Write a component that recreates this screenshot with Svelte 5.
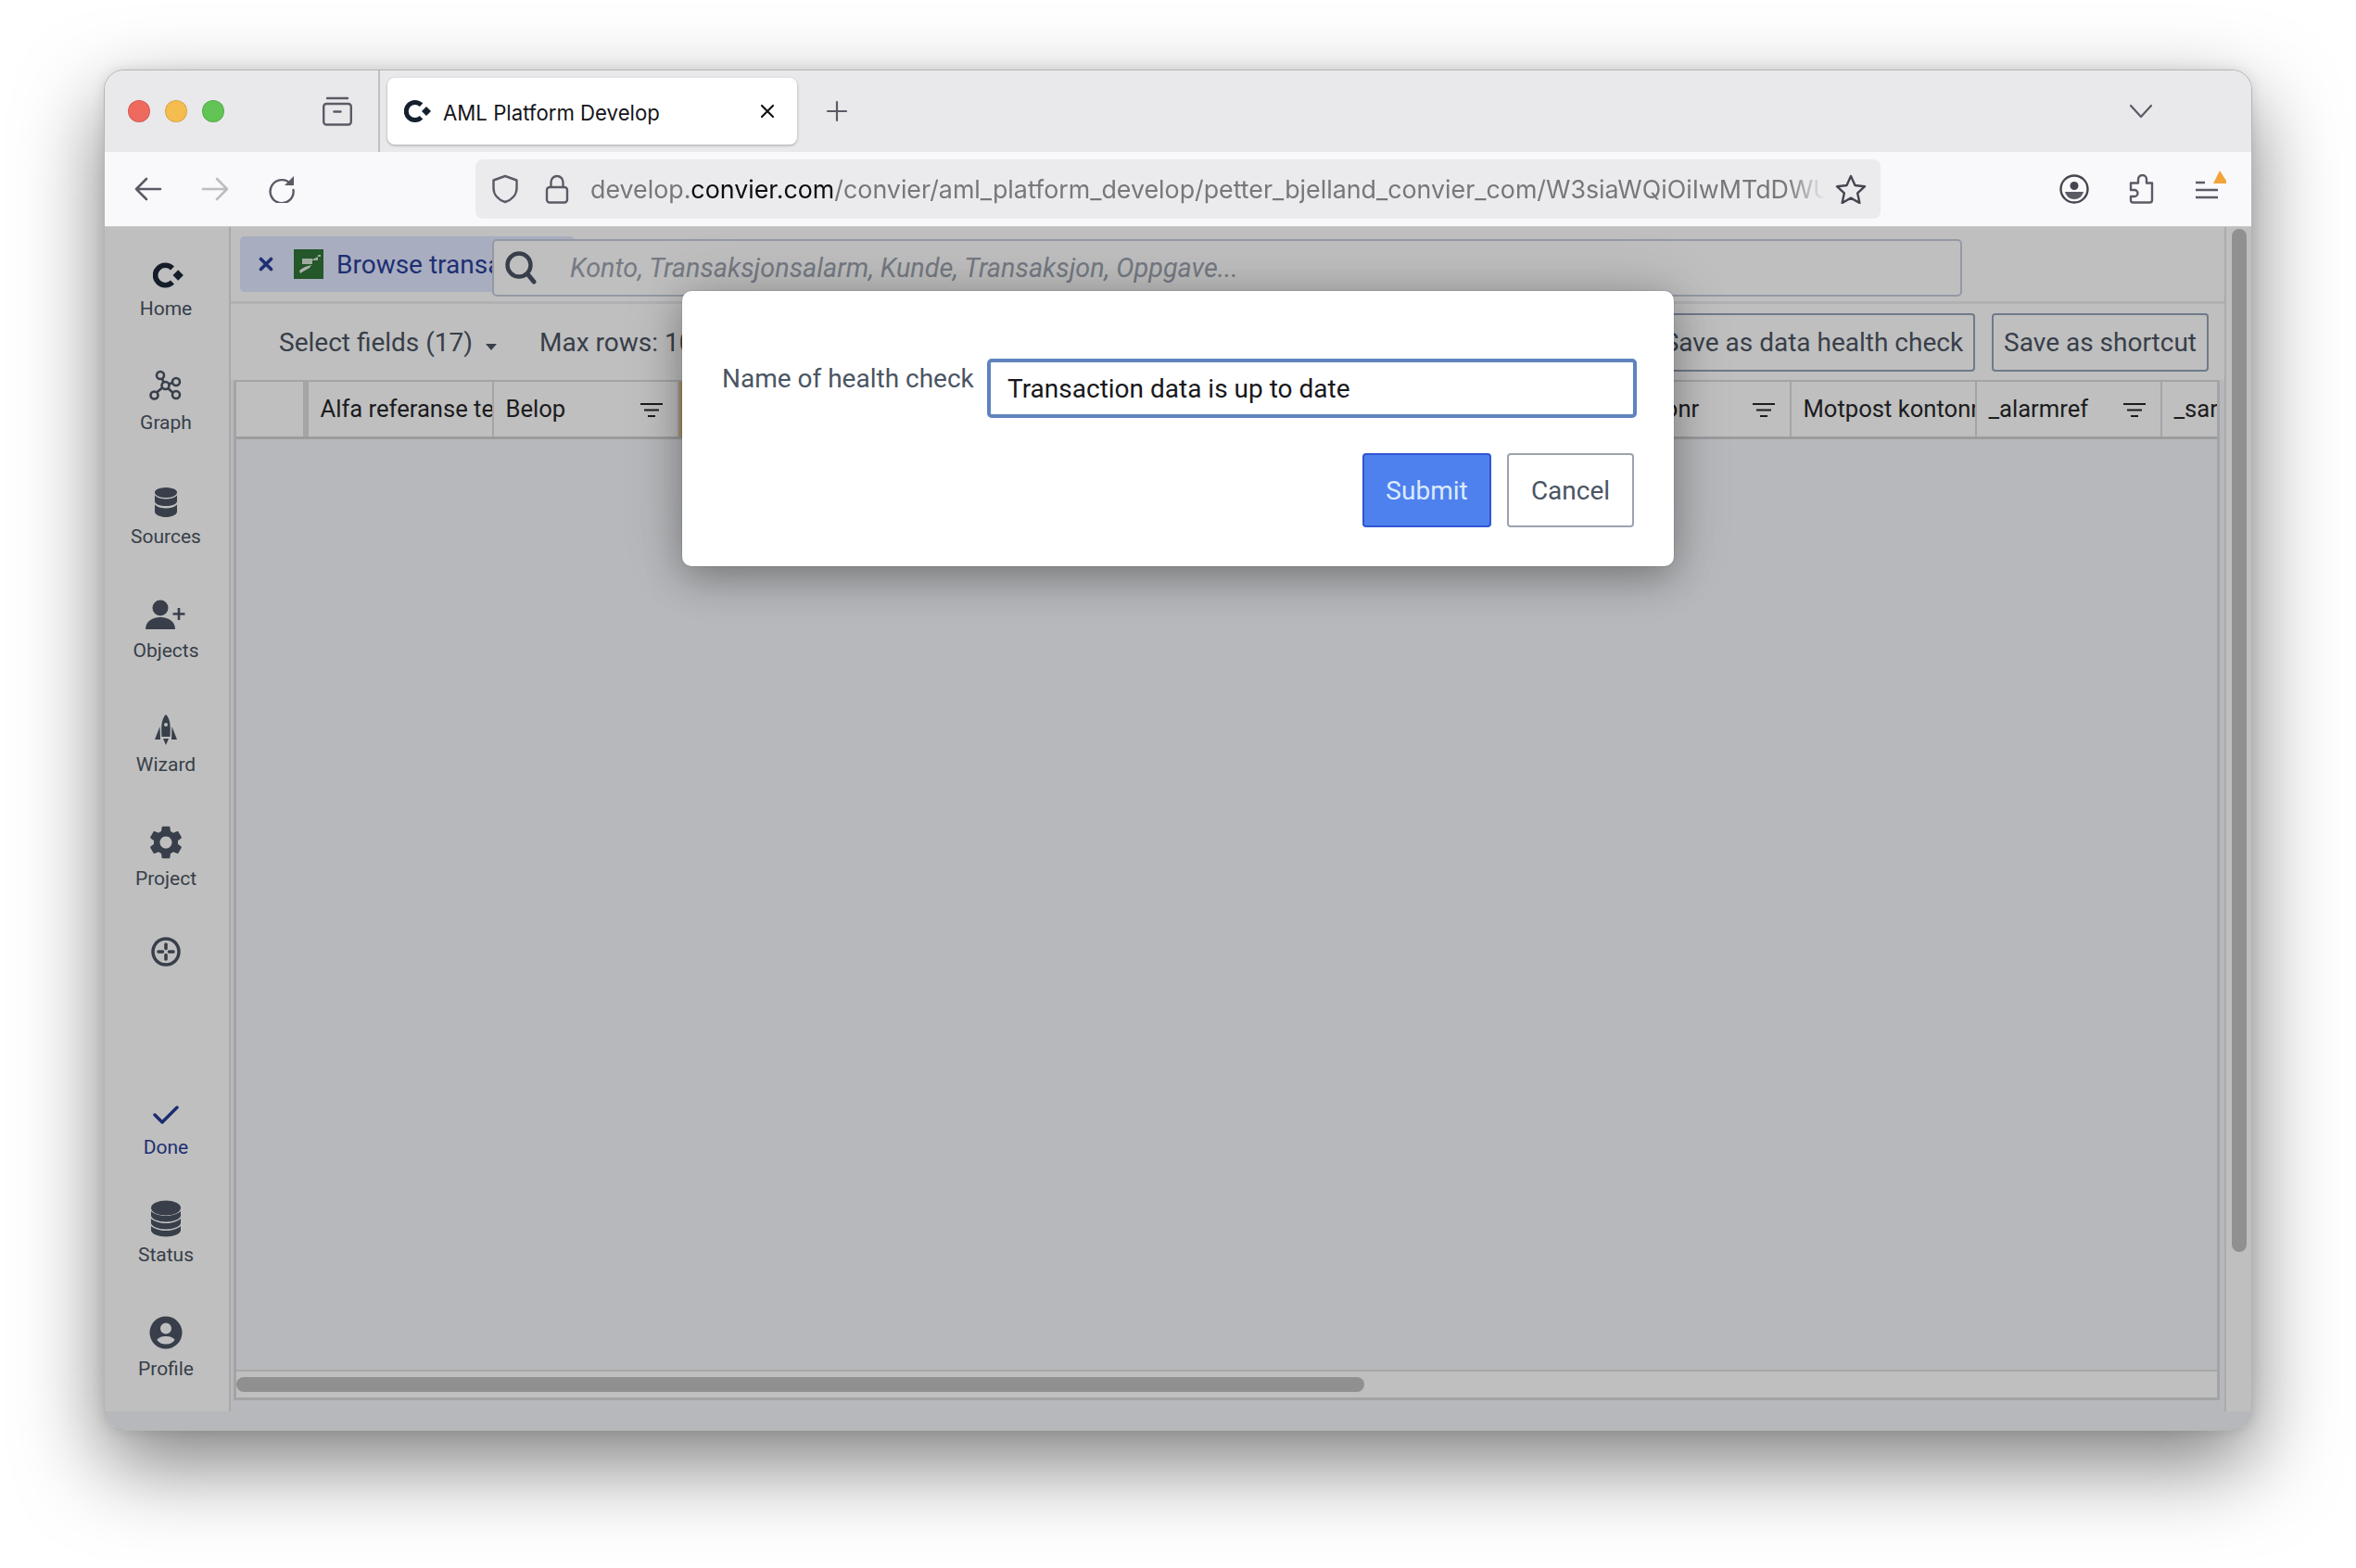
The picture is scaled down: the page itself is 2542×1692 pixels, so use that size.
<script>
  const cols = [
    { label: 'Alfa referanse tekst', filter: false },
    { label: 'Belop', filter: true },
    { label: 'Dato', filter: true, accent: true },
    { label: 'Tekst', filter: true },
    { label: 'Valuta', filter: true },
    { label: 'Type', filter: true },
    { label: 'Kunde', filter: true },
    { label: 'Radionr', filter: true },
    { label: 'Motpost kontonr', filter: false },
    { label: '_alarmref', filter: true },
    { label: '_sarref', filter: true }
  ];
</script>

<div class="page">
  <div class="window">
    <div class="titlebar">
      <div class="lights">
        <span class="light red"></span><span class="light yellow"></span><span class="light green"></span>
      </div>
      <svg class="archive" width="32" height="32" viewBox="0 0 32 32" fill="none" stroke="#5b5b66" stroke-width="2.4" stroke-linecap="round">
        <path d="M5 2h22" /><rect x="1.2" y="8" width="29.6" height="22.5" rx="3" /><path d="M12.5 16.5h7" />
      </svg>
      <span class="tabsep"></span>
      <div class="browser-tab">
        <svg class="logo" width="30" height="24" viewBox="0 0 30 24">
          <path d="M18.5 5.3A9.5 9.5 0 1 0 18.5 18.7" fill="none" stroke="#15202e" stroke-width="5" />
          <path d="M24 7l5 5-5 5-5-5z" fill="#15202e" />
        </svg>
        <span class="tab-title">AML Platform Develop</span>
        <svg class="tab-close" width="16" height="16" viewBox="0 0 16 16" stroke="#15141a" stroke-width="2.2" stroke-linecap="round"><path d="M2 2l12 12M14 2L2 14" /></svg>
      </div>
      <svg class="plus" width="24" height="24" viewBox="0 0 24 24" stroke="#5b5b66" stroke-width="2.2" stroke-linecap="round"><path d="M12 2v20M2 12h20" /></svg>
      <svg class="chev" width="26" height="16" viewBox="0 0 26 16" fill="none" stroke="#5b5b66" stroke-width="2.2" stroke-linecap="round" stroke-linejoin="round"><path d="M2 2l11 12L24 2" /></svg>
    </div>

    <div class="toolbar">
      <svg class="nav-back" width="30" height="26" viewBox="0 0 30 26" fill="none" stroke="#5b5b66" stroke-width="2.6" stroke-linecap="round" stroke-linejoin="round"><path d="M2 13h26M13 2L2 13l11 11" /></svg>
      <svg class="nav-fwd" width="30" height="26" viewBox="0 0 30 26" fill="none" stroke="#bdbdc1" stroke-width="2.6" stroke-linecap="round" stroke-linejoin="round"><path d="M2 13h26M17 2l11 11-11 11" /></svg>
      <svg class="nav-reload" width="30" height="30" viewBox="0 0 30 30" fill="none" stroke="#5b5b66" stroke-width="2.4"><path d="M25 10A12.5 12.5 0 1 0 27.5 16" stroke-linecap="round" /><path d="M28 1v10H18z" fill="#5b5b66" stroke="none" /></svg>
      <div class="urlbar">
        <svg class="shield" width="30" height="32" viewBox="0 0 30 32" fill="none" stroke="#5b5b66" stroke-width="2.4" stroke-linejoin="round"><path d="M15 2l12.5 4.500V15c0 7-5 12.500-12.500 15C7.500 27.500 2.500 22 2.500 15V6.500z" /></svg>
        <svg class="lock" width="26" height="32" viewBox="0 0 26 32" fill="none" stroke="#5b5b66" stroke-width="2.4"><rect x="2" y="14" width="22" height="16.500" rx="3" /><path d="M6.500 14V8.500a6.500 6.500 0 0 1 13 0V14" /></svg>
        <div class="url"><span class="dim">develop.</span>convier.com<span class="dim">/convier/aml_platform_develop/petter_bjelland_convier_com/W3siaWQiOiIwMTdDWUifQ</span></div>
        <svg class="star" width="34" height="32" viewBox="0 0 34 32" fill="none" stroke="#45454f" stroke-width="2.4" stroke-linejoin="round"><path d="M17 2l4.500 10 10.500 1.200-7.800 7.200 2.200 10.600L17 25.600 7.600 31l2.200-10.600L2 13.200 12.500 12z" /></svg>
      </div>
      <svg class="acct" width="32" height="32" viewBox="0 0 32 32"><circle cx="16" cy="16" r="14.500" fill="none" stroke="#45454f" stroke-width="2.400" /><circle cx="16" cy="12.500" r="4.500" fill="#45454f" /><path d="M6 19h20c-1.500 5-5 8-10 8s-8.500-3-10-8z" fill="#5b5b66" /></svg>
      <svg class="puzzle" width="28" height="32" viewBox="0 0 28 32" fill="none" stroke="#5b5b66" stroke-width="2.400" stroke-linejoin="round"><path d="M2 9.500H10V5.500A4.500 4.500 0 0 1 19 5.500V9.500H25V28A2.500 2.500 0 0 1 22.500 30.500H4.500A2.500 2.500 0 0 1 2 28V24H6A3.500 3.500 0 0 0 6 17H2Z" /></svg>
      <svg class="menu" width="34" height="36" viewBox="0 0 34 36">
        <path d="M1 15h10M1 23h24M1 31h24" stroke="#5b5b66" stroke-width="2.400" />
        <path d="M20 16l7-14 7 11v3z" fill="#f3a33c" />
      </svg>
    </div>

    <div class="content">
      <div class="row">
        <nav class="sidebar">
          <div class="nav-item home">
            <svg width="34" height="26" viewBox="0 0 30 24"><path d="M18.500 5.300A9.500 9.500 0 1 0 18.500 18.700" fill="none" stroke="#1b2737" stroke-width="5" /><path d="M24 7l5 5-5 5-5-5z" fill="#1b2737" /></svg>
            <span>Home</span>
          </div>
          <div class="nav-item">
            <svg width="36" height="36" viewBox="0 0 36 36" fill="none" stroke="#4b5563" stroke-width="2.600"><path d="M17 17L12 5M17 17L28 13M17 17L28 27M17 17L5 27" /><circle cx="12" cy="6" r="4" fill="#fff" /><circle cx="29" cy="13" r="4" fill="#fff" /><circle cx="29" cy="27" r="4" fill="#fff" /><circle cx="5.500" cy="27.500" r="4" fill="#fff" /><circle cx="17.500" cy="17" r="4" fill="#fff" /></svg>
            <span>Graph</span>
          </div>
          <div class="nav-item low">
            <svg width="24" height="32" viewBox="0 0 24 32" fill="#4b5563"><ellipse cx="12" cy="5.500" rx="12" ry="5.500" /><path d="M0 8.500C3 11.500 8 12.500 12 12.500S21 11.500 24 8.500V15C24 18 18 20 12 20S0 18 0 15Z" /><path d="M0 18.500C3 21.500 8 22.500 12 22.500S21 21.500 24 18.500V26C24 29.500 18 32 12 32S0 29.500 0 26Z" /></svg>
            <span>Sources</span>
          </div>
          <div class="nav-item">
            <svg width="44" height="32" viewBox="0 0 44 32" fill="#4b5563"><circle cx="16" cy="9" r="8.500" /><path d="M0 32C0 24 7 19 16 19S32 24 32 32Z" /><path d="M36 9v13M29.500 15.500h13" stroke="#4b5563" stroke-width="2.600" /></svg>
            <span>Objects</span>
          </div>
          <div class="nav-item low">
            <svg width="26" height="34" viewBox="0 0 26 34" fill="#4b5563"><path fill-rule="evenodd" d="M13 0C17 4 18.500 10 17.500 24H8.500C7.500 10 9 4 13 0ZM13 9a2 2 0 1 0 0 4 2 2 0 0 0 0-4Z" /><path d="M6.500 13L1 27H7ZM19.500 13L25 27H19ZM10 26H16L13 33Z" /></svg>
            <span>Wizard</span>
          </div>
          <div class="nav-item">
            <svg width="38" height="38" viewBox="1.500 1.500 21 21" fill="#4b5563"><path fill-rule="evenodd" d="M19.140 12.940c.04-.3.06-.61.06-.94 0-.32-.02-.64-.07-.94l2.030-1.580c.18-.14.23-.41.12-.61l-1.920-3.320c-.12-.22-.37-.29-.59-.22l-2.390.96c-.5-.38-1.030-.7-1.620-.94l-.36-2.540c-.04-.24-.24-.41-.48-.41h-3.840c-.24 0-.43.17-.47.41l-.36 2.540c-.59.24-1.130.57-1.620.94l-2.390-.96c-.22-.08-.47 0-.59.22L2.740 8.870c-.12.21-.08.47.12.61l2.030 1.580c-.05.3-.09.63-.09.94s.02.64.07.94l-2.030 1.580c-.18.14-.23.41-.12.61l1.920 3.320c.12.22.37.29.59.22l2.390-.96c.5.38 1.030.7 1.620.94l.36 2.540c.05.24.24.41.48.41h3.840c.24 0 .44-.17.47-.41l.36-2.540c.59-.24 1.130-.56 1.620-.94l2.390.96c.22.08.47 0 .59-.22l1.920-3.320c.12-.22.07-.47-.12-.61l-2.010-1.580zM12 15.600c-1.980 0-3.600-1.620-3.600-3.600s1.620-3.600 3.600-3.600 3.600 1.620 3.600 3.600-1.620 3.600-3.600 3.600z" /></svg>
            <span>Project</span>
          </div>
          <div class="nav-item bare">
            <svg width="32" height="32" viewBox="0 0 32 32" fill="none" stroke="#4b5563" stroke-linecap="round"><circle cx="16" cy="16" r="14" stroke-width="3.500" /><path d="M16 8v4.500M16 19.500V24M8 16h4.500M19.500 16H24" stroke-width="3.600" /></svg>
          </div>
          <div class="nav-item done">
            <svg width="28" height="22" viewBox="0 0 28 22" fill="none" stroke="#253a94" stroke-width="3.400" stroke-linecap="round" stroke-linejoin="round"><path d="M2 11l8 8L26 3" /></svg>
            <span>Done</span>
          </div>
          <div class="nav-item status">
            <svg width="32" height="39" viewBox="0 0 32 39" fill="#4b5563"><ellipse cx="16" cy="8" rx="16" ry="8" /><path d="M0 11.500C4 15 10 16.500 16 16.500S28 15 32 11.500V16C32 20 24 23 16 23S0 20 0 16Z" /><path d="M0 19.500C4 23 10 24.500 16 24.500S28 23 32 19.500V24C32 28 24 31 16 31S0 28 0 24Z" /><path d="M0 27.500C4 31 10 32.500 16 32.500S28 31 32 27.500V32C32 36 24 39 16 39S0 36 0 32Z" /></svg>
            <span>Status</span>
          </div>
          <div class="nav-item">
            <svg width="36" height="36" viewBox="0 0 36 36" fill="#4b5563"><path fill-rule="evenodd" d="M18 .5a17.500 17.500 0 1 0 0 35 17.500 17.500 0 0 0 0-35ZM18 7.500a6 6 0 1 1 0 12 6 6 0 0 1 0-12ZM18 22c4.500 0 8.500 1.500 9.500 4-2 3-5.500 4.500-9.500 4.500S10.500 29 8.500 26c1-2.500 5-4 9.500-4Z" /></svg>
            <span>Profile</span>
          </div>
        </nav>

        <main class="main">
          <div class="tabs">
            <div class="app-tab">
              <svg class="x" width="16" height="16" viewBox="0 0 16 16" stroke="#2a3f9a" stroke-width="3.600" stroke-linecap="round"><path d="M2.500 2.500l11 11M13.500 2.500l-11 11" /></svg>
              <svg class="thumb" width="32" height="32" viewBox="0 0 32 32"><rect width="32" height="32" fill="#317537" /><rect x="9" y="10" width="11" height="6" fill="#d6e5d6" /><path d="M20 11l6-3v4h-6zM26 6h3v2h-3z" fill="#d6e5d6" /><path d="M6 23c3-3 8-5 13-6l-2 3-7 4-3 2z" fill="#e6f0e6" /></svg>
              <span>Browse transactions</span>
            </div>
            <div class="search">
              <svg width="34" height="36" viewBox="0 0 34 36" fill="none" stroke="#4b5563" stroke-width="4.400" stroke-linecap="round"><circle cx="15" cy="15" r="12.500" /><path d="M24.500 25L31 33" stroke-width="5" /></svg>
              <span class="placeholder">Konto, Transaksjonsalarm, Kunde, Transaksjon, Oppgave...</span>
            </div>
          </div>

          <div class="actions">
            <span class="select">Select fields (17)</span>
            <span class="caret"></span>
            <span class="maxrows">Max rows: 1000</span>
            <div class="buttons">
              <span class="btn">Save as data health check</span>
              <span class="btn">Save as shortcut</span>
            </div>
          </div>

          <div class="table">
            <div class="thead">
              <div class="corner"></div>
              {#each cols as col}
                <div class="th" class:accent={col.accent}>
                  <span class="th-label">{col.label}</span>
                  {#if col.filter}
                    <svg class="filter" width="24" height="16" viewBox="0 0 24 16" stroke="#26262a" stroke-width="2.200"><path d="M0 2h24M4 8.500h16M8 15h8" /></svg>
                  {/if}
                </div>
              {/each}
            </div>
            <div class="tbody"></div>
            <div class="hscroll"><span class="hthumb"></span></div>
          </div>
        </main>

        <div class="vtrack"><span class="vthumb"></span></div>
      </div>

      <div class="overlay">
        <div class="dialog">
          <div class="field">
            <span class="field-label">Name of health check</span>
            <div class="input">Transaction data is up to date</div>
          </div>
          <div class="dialog-actions">
            <button class="submit">Submit</button>
            <button class="cancel">Cancel</button>
          </div>
        </div>
      </div>
    </div>
  </div>
</div>

<style>
  :global(body) { margin: 0; background: #fff; }
  .page {
    width: 2542px; height: 1692px; box-sizing: border-box; padding: 75px 112px 148px;
    font-family: Roboto, "Liberation Sans", sans-serif; overflow: hidden;
  }
  .window {
    height: 100%; box-sizing: border-box; border: 1px solid #b4b4b4; border-radius: 22px; overflow: clip;
    display: flex; flex-direction: column; position: relative; background: #f5f6fa;
    box-shadow: 0 36px 90px rgba(0, 0, 0, .5), 0 0 14px rgba(0, 0, 0, .1);
  }
  .titlebar { height: 88px; flex: none; display: flex; align-items: center; background: #e9e9ec; }
  .lights { display: flex; gap: 16px; margin-left: 25px; }
  .light { width: 24px; height: 24px; border-radius: 50%; box-sizing: border-box; border: 1px solid rgba(0,0,0,.12); }
  .red { background: #ee6a5f; } .yellow { background: #f5bd4f; } .green { background: #61c454; }
  .archive { margin-left: 106px; }
  .tabsep { width: 2px; height: 88px; background: #bfbfc1; margin-left: 28px; }
  .browser-tab {
    width: 442px; height: 72px; margin-left: 8px; background: #fff; border-radius: 8px; display: flex; align-items: center;
    box-shadow: 0 1px 3px rgba(0,0,0,.3); box-sizing: border-box; padding-left: 18px;
  }
  .tab-title { margin-left: 12px; font: 22.200px Inter, Roboto, sans-serif; color: #15141a; white-space: nowrap; position: relative; top: 1px; }
  .tab-close { margin-left: auto; margin-right: 24px; }
  .plus { margin-left: 31px; }
  .chev { margin-left: auto; margin-right: 106px; }

  .toolbar { height: 80px; flex: none; display: flex; align-items: center; background: #f9f9fb; border-bottom: 1px solid #c9c9c9; }
  .nav-back { margin-left: 32px; } .nav-fwd { margin-left: 42px; } .nav-reload { margin-left: 42px; }
  .urlbar {
    width: 1516px; height: 64px; margin-left: 194px; background: #ebebee; border-radius: 8px;
    display: flex; align-items: center; box-sizing: border-box; padding-left: 17px;
  }
  .lock { margin-left: 28px; }
  .url {
    width: 1332px; margin-left: 23px; flex: none; overflow: hidden; white-space: nowrap; font: 26.800px Inter, Roboto, sans-serif; color: #0c0c0d;
    -webkit-mask-image: linear-gradient(90deg, #000 97%, transparent);
    mask-image: linear-gradient(90deg, #000 97%, transparent);
  }
  .dim { color: #77777b; }
  .star { margin-left: 11px; }
  .acct { margin-left: 193px; } .puzzle { margin-left: 43px; } .menu { margin-left: 43px; margin-top: -8px; }

  .content { flex: 1; min-height: 0; position: relative; display: flex; flex-direction: column; padding-bottom: 20px; }
  .row { flex: 1; min-height: 0; display: flex; }
  .sidebar {
    width: 136px; flex: none; box-sizing: border-box; background: #fff; border-right: 2px solid #e2e2e2;
    display: flex; flex-direction: column; align-items: center; padding: 27px 2px 0 0; color: #4b5563;
  }
  .nav-item { height: 123px; flex: none; display: flex; flex-direction: column; align-items: center; width: 100%; font-size: 21px; line-height: 26px; }
  .nav-item svg { height: 44px; flex: none; }
  .nav-item span { margin-top: 4px; }
  .nav-item.home svg { margin: 3px 0 -3px 5px; }
  .nav-item.low svg { margin-top: 2px; margin-bottom: -2px; }
  .nav-item.bare { height: 44px; margin-bottom: 132px; margin-top: -5px; }
  .nav-item.done { color: #2a3f9a; height: 112px; }
  .nav-item.done span { margin-top: 0; }

  .main { width: 2151px; flex: none; display: flex; flex-direction: column; min-height: 0; background: #f5f6fa; }
  .tabs { flex: none; background: #fff; border-bottom: 3px solid #ecedef; position: relative; padding: 10px 0 0 10px; height: 70px; }
  .app-tab {
    width: 361px; height: 60px; background: #e0e7ff; border-radius: 5px; display: flex; align-items: center; overflow: hidden;
    color: #2a3f9a; font-size: 28px; white-space: nowrap; box-sizing: border-box; padding-left: 20px;
  }
  .thumb { margin-left: 22px; margin-right: 14px; flex: none; }
  .x { flex: none; }
  .search {
    position: absolute; left: 282px; top: 13px; width: 1586px; height: 62px; box-sizing: border-box; background: #fff;
    border: 2.500px solid #c4cddc; border-radius: 5px; display: flex; align-items: center; padding-left: 12px;
  }
  .placeholder { margin-left: 36px; font-size: 28.800px; font-style: italic; color: #9ca3af; white-space: nowrap; }

  .actions { height: 82px; flex: none; background: #fff; display: flex; align-items: center; padding: 0 17px 0 52px; color: #4b5563; font-size: 28px; }
  .caret { width: 0; height: 0; border: 6.500px solid transparent; border-top: 7px solid #4b5563; border-bottom: 0; margin: 10px 0 0 14px; }
  .maxrows { margin-left: 46px; white-space: nowrap; }
  .buttons { margin-left: auto; display: flex; gap: 18px; }
  .btn { height: 63px; box-sizing: border-box; border: 2.500px solid #94a3b8; border-radius: 4px; padding: 0 11px; display: flex; align-items: center; white-space: nowrap; }

  .table { width: 2143px; height: 1101px; flex: none; margin-left: 3px; box-sizing: border-box; border: 3px solid #dadbde; border-top-width: 2px; display: flex; flex-direction: column; overflow: hidden; }
  .thead { height: 59px; flex: none; display: flex; background: #fff; border-bottom: 3px solid #cfd0d3; overflow: hidden; color: #27272a; font-size: 25.600px; }
  .corner { width: 78px; flex: none; box-sizing: border-box; border-right: 6px solid #dcdcdc; }
  .th { width: 200px; flex: none; box-sizing: border-box; border-right: 2px solid #dcdcdc; display: flex; align-items: center; padding-left: 12.500px; overflow: hidden; white-space: nowrap; }
  .th.accent { box-shadow: inset 3px 0 0 #e9c48a; }
  .th-label { flex: none; position: relative; top: -1px; }
  .filter { flex: none; margin-left: auto; margin-right: 16px; }
  .tbody { flex: 1; background: #f5f6fa; }
  .hscroll { height: 30px; flex: none; background: #fff; border-top: 2px solid #e0e0e2; box-sizing: border-box; display: flex; align-items: center; }
  .hthumb { width: 1217px; height: 16px; border-radius: 8px; background: #c1c1c1; }

  .vtrack { width: 29px; flex: none; background: #fff; border-left: 2px solid #e4e4e4; box-sizing: border-box; padding: 2px 5px 0 6px; }
  .vthumb { display: block; width: 16px; height: 1104px; border-radius: 8px; background: #c1c1c1; }

  .overlay { position: absolute; inset: 0; background: rgba(0, 0, 0, .25); display: flex; justify-content: center; align-items: flex-start; padding-top: 69px; box-sizing: border-box; }
  .dialog {
    width: 1070px; height: 297px; box-sizing: border-box; background: #fff; border-radius: 10px; padding: 73px 40px 0 43px;
    box-shadow: 0 12px 40px rgba(0, 0, 0, .28), 0 0 70px rgba(0, 0, 0, .14), 0 0 0 1px rgba(0,0,0,.08);
    font-size: 28px; color: #4b5563;
  }
  .field { display: flex; align-items: flex-start; }
  .field-label { width: 286px; flex: none; line-height: 34px; margin-top: 5px; white-space: nowrap; }
  .input { flex: 1; height: 64px; box-sizing: border-box; border: 4px solid #5f83be; border-radius: 5px; display: flex; align-items: center; padding-left: 18px; color: #18181b; }
  .dialog-actions { display: flex; justify-content: flex-end; gap: 17px; margin: 38px 3px 0 0; }
  button { font: inherit; height: 80px; border-radius: 4px; box-sizing: border-box; }
  .submit { width: 139px; background: #4f81ee; border: 2.500px solid #2f55d4; color: #dbeafe; }
  .cancel { width: 137px; background: #fff; border: 2.500px solid #9ca3af; color: #4b5563; }
</style>
